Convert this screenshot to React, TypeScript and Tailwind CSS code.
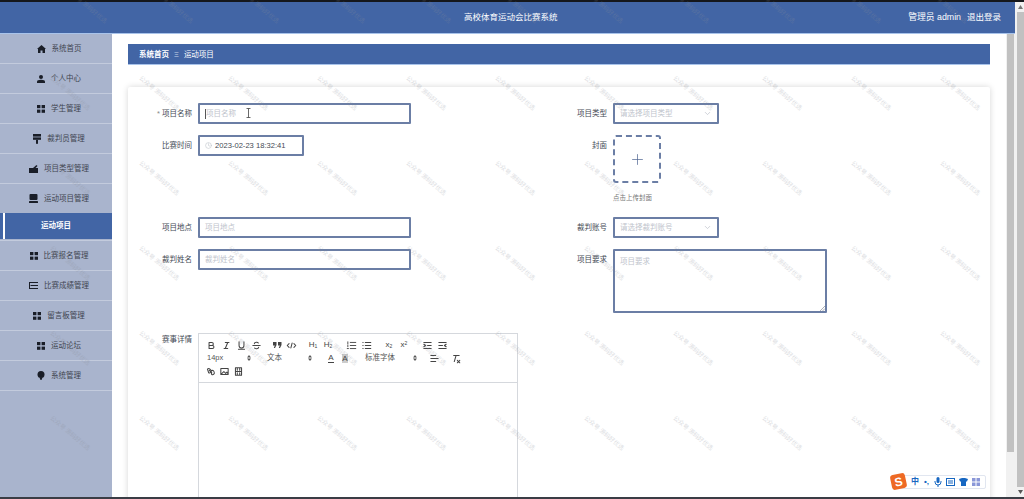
import React from 'react';
import { Clock, ChevronDown, Plus } from 'lucide-react';

const FONT = "font-['Liberation_Sans','Noto_Sans_CJK_SC',sans-serif]";

const Grid4 = () => (
  <svg width="8" height="8" viewBox="0 0 8 8" fill="#1a1e28">
    <rect x="0" y="0" width="3.4" height="3.2" />
    <rect x="4.600" y="0" width="3.4" height="3.2" />
    <rect x="0" y="4.600" width="3.4" height="3.2" />
    <rect x="4.600" y="4.600" width="3.4" height="3.2" />
  </svg>
);

const icons: Record<string, React.ReactNode> = {
  home: (
    <svg width="9" height="8" viewBox="0 0 9 8" fill="#1a1e28">
      <path d="M4.500 0 9 4H8v4H5.500V5.500h-2V8H1V4H0z" />
    </svg>
  ),
  user: (
    <svg width="8" height="8" viewBox="0 0 8 8" fill="#1a1e28">
      <circle cx="4" cy="2" r="2" />
      <path d="M0 8V6.500C0 5.500 1.500 4.800 4 4.800s4 .7 4 1.700V8z" />
    </svg>
  ),
  grid: <Grid4 />,
  stamp: (
    <svg width="8" height="10" viewBox="0 0 8 10" fill="#1a1e28">
      <rect x="0" y="0" width="8" height="2.600" />
      <rect x="0" y="3.400" width="8" height="2.400" />
      <rect x="3" y="5.800" width="2" height="4" />
    </svg>
  ),
  case: (
    <svg width="9" height="8" viewBox="0 0 9 8" fill="#1a1e28">
      <rect x="0" y="3" width="9" height="5" />
      <path d="M4 3 7.500 0 8.500 1 6.500 3z" />
    </svg>
  ),
  monitor: (
    <svg width="9" height="9" viewBox="0 0 9 9" fill="#1a1e28">
      <rect x="0.500" y="0" width="8" height="6" rx="1" />
      <rect x="0" y="7" width="9" height="2" rx="0.5" />
    </svg>
  ),
  list: (
    <svg width="9" height="7" viewBox="0 0 9 7" fill="#1a1e28">
      <rect x="0" y="0" width="9" height="1" />
      <rect x="1.500" y="3" width="7.500" height="1" />
      <rect x="0" y="6" width="9" height="1" />
      <rect x="0" y="1" width="1" height="5" />
    </svg>
  ),
  bulb: (
    <svg width="8" height="9" viewBox="0 0 8 9" fill="#1a1e28">
      <circle cx="4" cy="3.500" r="3.500" />
      <path d="M2.500 6.500h3L4.500 9h-1z" />
    </svg>
  ),
};

const menu = [
  { label: '系统首页', icon: 'home' },
  { label: '个人中心', icon: 'user' },
  { label: '学生管理', icon: 'grid' },
  { label: '裁判员管理', icon: 'stamp' },
  { label: '项目类型管理', icon: 'case' },
  { label: '运动项目管理', icon: 'monitor' },
  { label: '运动项目', active: true },
  { label: '比赛报名管理', icon: 'grid' },
  { label: '比赛成绩管理', icon: 'list' },
  { label: '留言板管理', icon: 'grid' },
  { label: '运动论坛', icon: 'grid' },
  { label: '系统管理', icon: 'bulb' },
];

const Sidebar = () => (
  <aside className="w-[112px] shrink-0 bg-[#a9b4cd]">
    {menu.map((item) =>
      item.active ? (
        <div key={item.label} className="-mt-[1px] flex h-[28px] items-stretch border-b border-[#c3cbdd] pb-[1px]">
          <div className="w-[3px] bg-[#4265a5]" />
          <div className="w-[2px] bg-white" />
          <div className="flex flex-1 items-center justify-center pr-[5px] text-[7.500px] font-bold text-white bg-[#4265a5]">{item.label}</div>
        </div>
      ) : (
        <div key={item.label} className="flex h-[30px] items-center justify-center gap-[6px] border-b border-[#c3cbdd] pl-[6px] text-[7.500px] text-[#3f4450]">
          {icons[item.icon as string]}
          <span>{item.label}</span>
        </div>
      ),
    )}
  </aside>
);

const Field = ({ label, required, children }: { label: string; required?: boolean; children: React.ReactNode }) => (
  <div className="flex items-start">
    <label className="flex h-[21px] w-[64px] shrink-0 items-center justify-end text-[7.500px] text-[#444a55]">
      {required && <span className="mr-[2px] text-[#888]">*</span>}
      {label}
    </label>
    <div className="ml-[6px]">{children}</div>
  </div>
);

const boxCls = 'flex h-[21px] items-center rounded-[1px] border-2 border-[#6b7ea5] bg-white px-[5px] text-[7.500px] text-[#c0c4cc]';

const TextInput = ({ placeholder, caret }: { placeholder: string; caret?: boolean }) => (
  <div className={`${boxCls} relative w-[213px]`}>
    {caret && <span className="h-[10px] w-px shrink-0 bg-[#555]" />}
    {placeholder}
    {caret && (
      <svg className="absolute left-[46px] top-[3px]" width="5" height="10" viewBox="0 0 5 10" fill="none" stroke="#444" strokeWidth="0.8">
        <path d="M.5.500h4M.5 9.500h4M2.500.5v9" />
      </svg>
    )}
  </div>
);

const SelectBox = ({ placeholder }: { placeholder: string }) => (
  <div className={`${boxCls} w-[106px] justify-between`}>
    <span>{placeholder}</span>
    <ChevronDown size={9} color="#c0c4cc" />
  </div>
);

const Tool = ({ children }: { children: React.ReactNode }) => (
  <span className="flex h-[12px] w-[12px] items-center justify-center text-[8px] text-[#444]">{children}</span>
);

const QIcon = ({ children }: { children: React.ReactNode }) => (
  <svg width="11" height="11" viewBox="0 0 18 18" fill="none" stroke="#444" strokeWidth="1.700" strokeLinecap="round" strokeLinejoin="round">
    {children}
  </svg>
);

const Updown = () => (
  <span className="flex h-[8px] w-[7px] items-center justify-center">
    <svg width="4" height="6" viewBox="0 0 4 6" fill="#555"><path d="M2 0 4 2.500H0zM2 6 0 3.500h4z" /></svg>
  </span>
);

const Toolbar = () => (
  <div className="border-b border-[#d5d8dd] px-[6px] pb-[5px] pt-[5px]">
    <div className="flex h-[12px] items-center">
      <Tool><QIcon><path d="M5 4h4.500a2.500 2.500 0 0 1 0 5H5zM5 9h5.500a2.500 2.500 0 0 1 0 5H5z" /></QIcon></Tool>
      <span className="w-[3px]" />
      <Tool><QIcon><path d="M7 4h6M5 14h6M11 4 7 14" /></QIcon></Tool>
      <span className="w-[3px]" />
      <Tool><QIcon><path d="M5 3v6a4 4 0 0 0 8 0V3M4 15h10" /></QIcon></Tool>
      <span className="w-[3px]" />
      <Tool><QIcon><path d="M3 9h12M12 5c-1-2-6-2-6.500 1M6 13c1 2 6 2 6.500-1" /></QIcon></Tool>
      <span className="w-[9px]" />
      <Tool>
        <svg width="9" height="6" viewBox="0 0 9 6" fill="#444">
          <path d="M0 0h3.500v3L2 6H.8L1.800 3.500H0zM5 0h3.500v3L7 6H5.800L6.800 3.500H5z" />
        </svg>
      </Tool>
      <span className="w-[2px]" />
      <Tool><QIcon><path d="M5 6 2 9l3 3M13 6l3 3-3 3M10 5 8 13" /></QIcon></Tool>
      <span className="w-[10px]" />
      <Tool><span>H<sub className="text-[5px]">1</sub></span></Tool>
      <span className="w-[3px]" />
      <Tool><span>H<sub className="text-[5px]">2</sub></span></Tool>
      <span className="w-[11px]" />
      <Tool><QIcon><path d="M7 4h9M7 9h9M7 14h9M3 3v3M3 8v3M2 14h2" strokeWidth="1.500" /></QIcon></Tool>
      <span className="w-[3px]" />
      <Tool><QIcon><path d="M7 4h9M7 9h9M7 14h9M3 4h.5M3 9h.5M3 14h.5" /></QIcon></Tool>
      <span className="w-[11px]" />
      <Tool><span>x<sub className="text-[5px]">2</sub></span></Tool>
      <span className="w-[3px]" />
      <Tool><span>x<sup className="text-[5px]">2</sup></span></Tool>
      <span className="w-[11px]" />
      <Tool><QIcon><path d="M3 4h12M9 9h6M3 14h12M3 7l3 2-3 2" /></QIcon></Tool>
      <span className="w-[3px]" />
      <Tool><QIcon><path d="M3 4h12M3 9h6M3 14h12M15 7l-3 2 3 2" /></QIcon></Tool>
    </div>
    <div className="mt-[1px] flex h-[12px] items-center pl-[2px] text-[7.500px] text-[#555]">
      <span className="w-[38px]">14px</span>
      <Updown />
      <span className="w-[15px]" />
      <span className="w-[39px]">文本</span>
      <Updown />
      <span className="w-[12px]" />
      <Tool><span className="border-b border-[#444] leading-[9px]">A</span></Tool>
      <span className="w-[2px]" />
      <Tool><span className="bg-[#ccc] leading-[9px]">A</span></Tool>
      <span className="w-[14px]" />
      <span className="w-[46px]">标准字体</span>
      <Updown />
      <span className="w-[10px]" />
      <Tool><QIcon><path d="M3 4h8M3 9h12M3 14h8" /></QIcon></Tool>
      <span className="w-[9px]" />
      <Tool><QIcon><path d="M6 4h9M10 4 7 14M12 12l4 4M16 12l-4 4" /></QIcon></Tool>
    </div>
    <div className="mt-[1px] flex h-[12px] items-center gap-[2px] -ml-[1px]">
      <Tool><QIcon><path d="M7 7 11 11M4 5a3 3 0 0 1 4 0l2 2a3 3 0 0 1-4 4zM10 8a3 3 0 0 1 4 0l1 2a3 3 0 0 1-4 4z" /></QIcon></Tool>
      <Tool><QIcon><path d="M3 4h12v10H3zM4 13l4-4 3 3 2-2 2 3" /></QIcon></Tool>
      <Tool><QIcon><path d="M4 3h10v12H4zM4 9h10M7 3v4M11 3v4M7 11v4M11 11v4" /></QIcon></Tool>
    </div>
  </div>
);

const ImeBar = () => (
  <div className="absolute left-[893px] top-[475px] flex h-[14px] w-[93px] items-center gap-[4px] rounded-[2px] border border-[#e1e6f0] bg-white pl-[17px] text-[8px] font-bold text-[#1767c2]">
    <span className="absolute -left-[3px] -top-[2px] flex h-[15px] w-[15px] -rotate-12 items-center justify-center rounded-[3px] bg-[#ee6a24] text-[12px] font-bold leading-none text-white">S</span>
    <span>中</span>
    <span className="w-[7px] text-center">•,</span>
    <svg width="8" height="10" viewBox="0 0 8 10" fill="#1767c2"><rect x="2.500" y="0" width="3" height="6" rx="1.500" /><path d="M1 4v1a3 3 0 0 0 6 0V4M4 8v2" stroke="#1767c2" fill="none" /></svg>
    <svg width="9" height="8" viewBox="0 0 9 8" fill="none" stroke="#1767c2"><rect x="0.500" y="0.500" width="8" height="7" /><path d="M2 3h5M2 5h5" /></svg>
    <svg width="9" height="8" viewBox="0 0 9 8" fill="#1767c2"><path d="M0 1 3 0h3l3 1-1 2.500H7V8H2V3.500H1z" /></svg>
    <svg width="8" height="8" viewBox="0 0 8 8" fill="#8a97d8"><rect width="3.500" height="3.500" /><rect x="4.500" width="3.500" height="3.500" /><rect y="4.500" width="3.500" height="3.500" /><rect x="4.500" y="4.500" width="3.500" height="3.500" /></svg>
  </div>
);

// the faint repeating text laid over the whole capture
const marks: { x: number; y: number }[] = [];
for (let r = 0; r < 6; r++) {
  for (let c = 0; c < 12; c++) {
    marks.push({ x: (r === 0 ? 62 : 45) + c * (r === 0 ? 86 : 89), y: r === 0 ? 2 : 4 + r * 85 });
  }
}

const Watermarks = () => (
  <div className="pointer-events-none absolute inset-0 overflow-hidden">
    {marks.map((m) => (
      <span
        key={`${m.x}-${m.y}`}
        className="absolute whitespace-nowrap text-[6px] text-[#8a8f99] opacity-30 rotate-[40deg]"
        style={{ left: m.x, top: m.y }}
      >
        公众号 源码好优选
      </span>
    ))}
  </div>
);

export default function App() {
  return (
    <div className={`relative h-[499px] w-[1024px] overflow-hidden bg-white ${FONT}`}>
      <div className="flex h-[497px] flex-col">
        <div className="h-[2px] shrink-0 bg-[#15171c]" />
        <div className="flex min-h-0 flex-1">
          <div className="flex min-w-0 flex-1 flex-col">
            <header className="flex h-[32px] shrink-0 items-center border-b border-[#a8c3ea] bg-[#4265a5] pr-[14px] text-[8.500px] text-white">
              <div className="flex-1 pl-[464px]">高校体育运动会比赛系统</div>
              <div className="flex gap-[6px]">
                <span className="text-[8.800px]">管理员 admin</span>
                <span>退出登录</span>
              </div>
            </header>
            <div className="flex min-h-0 flex-1">
              <Sidebar />
              <main className="min-w-0 flex-1 overflow-hidden px-[16px] pt-[10px]">
                <div className="flex h-[21px] items-center gap-[5px] border-b border-[#a8c3ea] bg-[#4265a5] pl-[11px] pt-[1px] text-[7.500px] text-white">
                  <span className="font-bold">系统首页</span>
                  <span className="text-[#c9d5ea]">Ξ</span>
                  <span>运动项目</span>
                </div>
                <div className="mt-[22px] h-[430px] rounded-[2px] bg-white pt-[16px] shadow-[0_0_6px_rgba(0,0,0,0.16)]">
                  <div className="grid grid-cols-[415px_1fr] gap-y-[11px]">
                    <Field label="项目名称" required><TextInput placeholder="项目名称" caret /></Field>
                    <Field label="项目类型"><SelectBox placeholder="请选择项目类型" /></Field>
                    <Field label="比赛时间">
                      <div className={`${boxCls} w-[106px] gap-[3px]`}>
                        <Clock size={7} color="#c0c4cc" />
                        <span className="text-[7.600px] text-[#444a55]">2023-02-23 18:32:41</span>
                      </div>
                    </Field>
                    <Field label="封面">
                      <div className="flex h-[48px] w-[48px] items-center justify-center rounded-[3px] border-2 border-dashed border-[#6b7ea5]">
                        <Plus size={17} strokeWidth={1} color="#4d6390" />
                      </div>
                      <div className="mt-[10px] h-[13px] text-[6.500px] text-[#777]">点击上传封面</div>
                    </Field>
                    <Field label="项目地点"><TextInput placeholder="项目地点" /></Field>
                    <Field label="裁判账号"><SelectBox placeholder="请选择裁判账号" /></Field>
                    <Field label="裁判姓名"><TextInput placeholder="裁判姓名" /></Field>
                    <Field label="项目要求">
                      <div className={`${boxCls} relative h-[64px] w-[214px] items-start pt-[5px]`}>
                        项目要求
                        <svg className="absolute bottom-0 right-0" width="5" height="5" viewBox="0 0 5 5" stroke="#8a8f99" strokeWidth="0.7">
                          <path d="M0 5 5 0M2.500 5 5 2.500" />
                        </svg>
                      </div>
                    </Field>
                  </div>
                  <div className="mt-[20px] flex items-start">
                    <label className="w-[64px] pt-[1px] text-right text-[7.500px] text-[#444a55]">赛事详情</label>
                    <div className="ml-[6px] h-[200px] w-[320px] border border-[#d5d8dd]">
                      <Toolbar />
                    </div>
                  </div>
                </div>
              </main>
              {/* inner page scrollbar */}
              <div className="w-[9px] shrink-0 bg-[#f1f1f1] px-[1px]">
                <div className="h-[418px] bg-[#c1c1c1]" />
              </div>
            </div>
          </div>
          {/* outer window scrollbar */}
          <div className="flex w-[9px] shrink-0 flex-col items-center bg-[#f1f1f1] pl-[1px]">
            <svg className="my-[3px] shrink-0" width="5" height="4" viewBox="0 0 5 4" fill="#777"><path d="M2.500 0 5 4H0z" /></svg>
            <div className="w-[7px] flex-1 bg-[#c1c1c1]" />
            <svg className="my-[3px] shrink-0" width="5" height="4" viewBox="0 0 5 4" fill="#555"><path d="M2.500 4 0 0h5z" /></svg>
          </div>
        </div>
      </div>
      <div className="h-[2px] bg-[#3a3d45]" />
      <ImeBar />
      <Watermarks />
    </div>
  );
}
